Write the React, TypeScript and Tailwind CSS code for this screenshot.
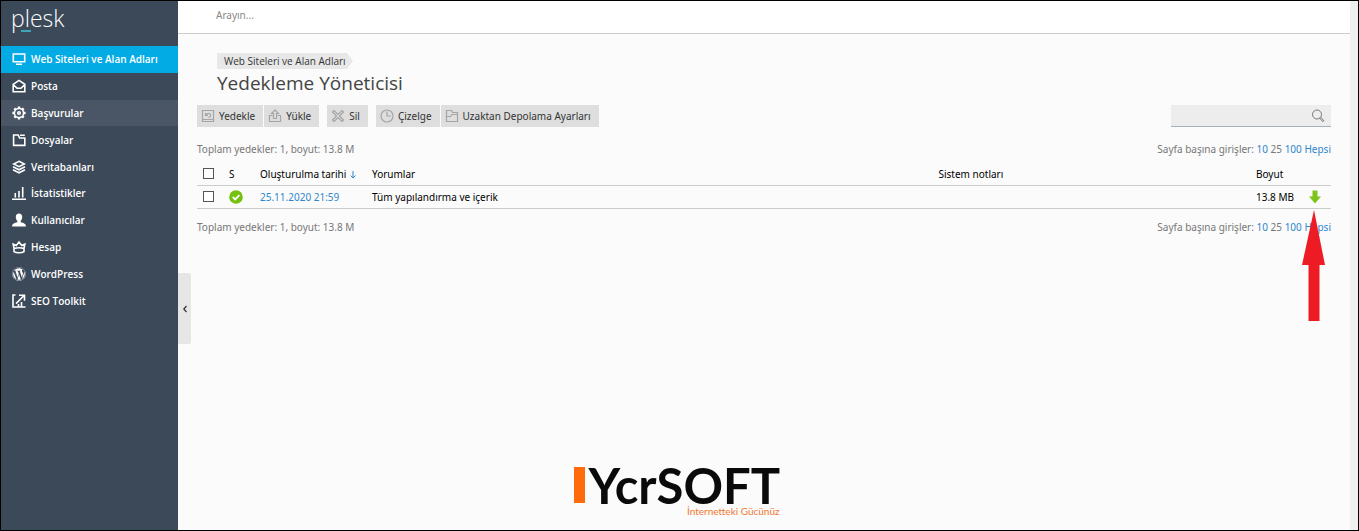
import { useState } from "react";
import type { ReactNode } from "react";
import { FaWordpress } from "react-icons/fa";

const Icon = ({ children }: { children: ReactNode }) => (
  <svg
    viewBox="0 0 14 14"
    className="size-[14px] shrink-0"
    fill="none"
    stroke="currentColor"
    strokeWidth="1.6"
    aria-hidden="true"
  >
    {children}
  </svg>
);

const menu: { label: string; icon: ReactNode }[] = [
  {
    label: "Web Siteleri ve Alan Adları",
    icon: (
      <Icon>
        <path d="M1.3 2h11.4v7.7H1.3zM4 12.3h6" />
      </Icon>
    ),
  },
  {
    label: "Posta",
    icon: (
      <Icon>
        <path d="M1.2 5.3 7 1.4l5.8 3.9v7.4H1.2zM1.5 6 5 9.2h4L12.5 6" />
      </Icon>
    ),
  },
  {
    label: "Başvurular",
    icon: (
      <Icon>
        <circle cx="7" cy="7" r="4.6" />
        <circle cx="7" cy="7" r="1.3" />
        <path
          strokeWidth="2.4"
          d="M7 .4v2M7 11.6v2M.4 7h2M11.6 7h2M2.3 2.3l1.2 1.2M10.5 10.5l1.2 1.2M2.3 11.7l1.2-1.2M10.5 3.5l1.2-1.2"
        />
      </Icon>
    ),
  },
  {
    label: "Dosyalar",
    icon: (
      <Icon>
        <path d="M1.6 2h4.6l1.4 3h5.2v7.4H1.6zM8 2.2h4.8" />
      </Icon>
    ),
  },
  {
    label: "Veritabanları",
    icon: (
      <Icon>
        <path d="M7 1.3 12.3 4 7 6.7 1.7 4zM1 6.8l6 3 6-3M1 9.8l6 3 6-3" />
      </Icon>
    ),
  },
  {
    label: "İstatistikler",
    icon: (
      <Icon>
        <path d="M0 13.2h14M3.3 7v4.5M7 5v6.5M10.7 1v10.5" />
      </Icon>
    ),
  },
  {
    label: "Kullanıcılar",
    icon: (
      <Icon>
        <path
          fill="currentColor"
          stroke="none"
          d="M7 .5c2 0 3.2 1.4 3.2 3.4 0 1.7-.7 3.1-1.5 3.9v1.5c1.6.5 4 .9 4.8 2.2.3.5.4 1.3.4 2H.1c0-.7.1-1.5.4-2 .8-1.3 3.2-1.7 4.8-2.2V7.8C4.5 7 3.8 5.6 3.8 3.9 3.8 1.9 5 .5 7 .5z"
        />
      </Icon>
    ),
  },
  {
    label: "Hesap",
    icon: (
      <Icon>
        <path d="M2 8.6 1.2 4.2 4.3 5.6 7 2l2.7 3.6 3.1-1.4L12 8.6c-3-1-7-1-10 0zM2 8.6v3c2 1.6 8 1.6 10 0v-3" />
      </Icon>
    ),
  },
  {
    label: "WordPress",
    icon: <FaWordpress className="size-[14px] shrink-0" aria-hidden="true" />,
  },
  {
    label: "SEO Toolkit",
    icon: (
      <Icon>
        <path d="M3.5 1H1v12h12.5M4 9.6l7.8-7.8M7 1.3h5.5v5.5M6.5 10v2.5M9.500 8v4.5" />
      </Icon>
    ),
  },
];

const ToolButton = ({ label, children }: { label: string; children: ReactNode }) => (
  <button
    type="button"
    className="flex h-[22px] items-center gap-1 bg-[#dedede] pr-2 pl-1 text-[#333]"
  >
    <svg
      viewBox="0 0 14 14"
      className="size-[14px] shrink-0 text-[#a5a5a5]"
      fill="none"
      stroke="currentColor"
      strokeWidth="1.2"
      aria-hidden="true"
    >
      {children}
    </svg>
    {label}
  </button>
);

const Checkbox = ({ label }: { label: string }) => (
  <input
    type="checkbox"
    aria-label={label}
    className="block size-[11px] appearance-none border border-[#555] bg-white checked:bg-[#2f86cd]"
  />
);

const PageInfo = () => (
  <div className="flex h-4 items-center justify-between text-[#777]">
    <span>Toplam yedekler: 1, boyut: 13.8 M</span>
    <span>
      Sayfa başına girişler:{" "}
      <a href="#10" className="text-[#2f86cd]">10</a> 25{" "}
      <a href="#100" className="text-[#2f86cd]">100</a>{" "}
      <a href="#all" className="text-[#2f86cd]">Hepsi</a>
    </span>
  </div>
);

const Sidebar = () => {
  const [active, setActive] = useState("Web Siteleri ve Alan Adları");

  return (
    <aside className="w-[177px] shrink-0 bg-[#3b4959] font-['Open_Sans',sans-serif] text-white">
      <a href="#home" aria-label="plesk" className="block h-[45px] pt-[3px] pl-[10px]">
        <span className="relative inline-block text-[23px] leading-7 font-light">
          plesk
          <span className="absolute bottom-0 left-[10px] h-[2px] w-[10px] bg-[#3da5b5]" />
        </span>
      </a>
      <nav className="grid h-[268px] auto-rows-fr">
        {menu.map(({ label, icon }) => (
          <a
            key={label}
            href="#menu"
            onClick={() => setActive(label)}
            className={`flex items-center gap-[5px] pl-[11px] font-semibold whitespace-nowrap ${
              active === label ? "bg-[#03abe5]" : label === "Başvurular" ? "bg-[#4a5665]" : ""
            }`}
          >
            {icon}
            {label}
          </a>
        ))}
      </nav>
    </aside>
  );
};

const BackupTable = () => (
  <table className="w-full table-fixed border-collapse text-left text-black">
    <colgroup>
      <col className="w-[26px]" />
      <col className="w-[31px]" />
      <col className="w-[112px]" />
      <col />
      <col className="w-[28%]" />
      <col className="w-[53px]" />
      <col className="w-[28px]" />
    </colgroup>
    <thead>
      <tr className="h-[24px] border-b border-[#ccc] *:pt-0.5 *:pl-1.5 *:font-normal">
        <th><Checkbox label="Tümünü seç" /></th>
        <th>S</th>
        <th className="whitespace-nowrap">
          Oluşturulma tarihi
          <svg viewBox="0 0 6 8" className="ml-1 inline h-2 w-[6px]" fill="none" stroke="#2f86cd" aria-hidden="true">
            <path d="M3 0v7M.5 4.5 3 7l2.5-2.5" />
          </svg>
        </th>
        <th>Yorumlar</th>
        <th>Sistem notları</th>
        <th>Boyut</th>
        <th />
      </tr>
    </thead>
    <tbody>
      <tr className="h-[23px] border-b border-[#ccc] *:pl-1.5">
        <td><Checkbox label="25.11.2020 21:59" /></td>
        <td>
          <svg viewBox="0 0 14 14" className="size-[14px]" fill="none" aria-hidden="true">
            <circle cx="7" cy="7" r="6.8" fill="#76c10f" />
            <path d="m3.8 7 2.4 2.4 4.2-4.2" stroke="#fff" strokeWidth="1.8" />
          </svg>
        </td>
        <td><a href="#backup" className="text-[#2f86cd]">25.11.2020 21:59</a></td>
        <td>Tüm yapılandırma ve içerik</td>
        <td />
        <td className="whitespace-nowrap">13.8 MB</td>
        <td>
          <a href="#download" aria-label="İndir" className="block">
            <svg viewBox="0 0 12 14" className="h-[14px] w-3" aria-hidden="true">
              <path d="M3.5.5h5v6H12l-6 7-6-7h3.5z" fill="#7ec51b" />
            </svg>
          </a>
        </td>
      </tr>
    </tbody>
  </table>
);

export default function App() {
  return (
    <div className="relative flex min-h-screen border border-black bg-[#fbfbfb] font-['Noto_Sans',sans-serif] text-[10px] leading-4">
      <Sidebar />
      <div className="relative min-w-0 flex-1">
        <header className="flex h-[33px] items-center border-b border-[#ccc] bg-white pb-1 pl-[38px]">
          <input
            type="search"
            aria-label="Arayın"
            placeholder="Arayın..."
            className="w-80 outline-none placeholder:text-[#888]"
          />
        </header>
        <main className="pt-[19px] pr-[19px] pl-[19px]">
          <div className="pl-5 font-['Open_Sans',sans-serif]">
            <a href="#sites" className="inline-flex h-4 text-[#333]">
              <span className="bg-[#e8e8e8] pl-[7px]">Web Siteleri ve Alan Adları</span>
              <svg viewBox="0 0 7 16" className="h-4 w-[7px]" aria-hidden="true">
                <path d="M0 0h1l6 8-6 8H0z" fill="#e8e8e8" />
              </svg>
            </a>
            <h1 className="text-[19px] leading-7 text-[#444]">Yedekleme Yöneticisi</h1>
          </div>
          <div className="mt-2 flex items-start justify-between">
            <div className="flex gap-2">
              <div className="flex gap-px">
                <ToolButton label="Yedekle">
                  <path d="M1.5 1.5h11v11h-11zM1.500 10.500h11M4.500 4v2.500H7M5 6.300c1.500-3 5-2 4.500.500-.2 1-1 1.500-2 1.500" />
                </ToolButton>
                <ToolButton label="Yükle">
                  <path d="M4.5 6.5h-3v6h11v-6h-3M5.5 9.5v-5h-2L7 1l3.500 3.500h-2v5z" />
                </ToolButton>
              </div>
              <ToolButton label="Sil">
                <path d="m1.5 3 1.5-1.500 4 4 4-4L12.500 3l-4 4 4 4-1.500 1.500-4-4-4 4L1.500 11l4-4z" />
              </ToolButton>
              <div className="flex gap-px">
                <ToolButton label="Çizelge">
                  <circle cx="7" cy="7" r="6" />
                  <path d="M7 2.5V7h4" />
                </ToolButton>
                <ToolButton label="Uzaktan Depolama Ayarları">
                  <path d="M1.5 1.500h5l1 2h5v9h-11zM1.500 7.500h4l1.500-2h5.500" />
                </ToolButton>
              </div>
            </div>
            <form className="flex h-[22px] w-40 items-center border-b border-[#a3afbc] bg-[#ededed] pr-1.5">
              <input type="search" aria-label="Ara" className="min-w-0 flex-1 px-1 outline-none" />
              <button type="button" aria-label="Ara">
                <svg viewBox="0 0 14 14" className="size-[14px]" fill="none" stroke="#777" aria-hidden="true">
                  <circle cx="6" cy="5.5" r="4.5" />
                  <path d="m8.8 9.5 1-1 3.2 3.2-1 1z" />
                </svg>
              </button>
            </form>
          </div>
          <div className="mt-[14px]">
            <PageInfo />
            <div className="mt-1 mb-[10px]">
              <BackupTable />
            </div>
            <PageInfo />
          </div>
        </main>
        <button
          type="button"
          aria-label="Menüyü daralt"
          className="absolute top-[272px] left-0 flex h-[71px] w-[13px] items-center justify-center rounded-r-xs bg-[#e6e6e6]"
        >
          <svg viewBox="0 0 4 8" className="h-2 w-1" fill="none" stroke="#333" strokeWidth="1.2" aria-hidden="true">
            <path d="M3.5 1 .8 4l2.7 3" />
          </svg>
        </button>
        <svg viewBox="0 0 24 112" className="absolute top-[209px] right-[24px] h-28 w-6" aria-hidden="true">
          <path d="M12 0 23 55h-5.5v56h-11V55H0z" fill="#ed1c24" />
        </svg>
      </div>
      <div className="w-2 shrink-0 bg-[#efefef]" />
      <div className="absolute bottom-[13px] left-1/2 -ml-[106px] flex w-[206px] flex-col font-['Lato',sans-serif]">
        <div className="flex items-center gap-1">
          <span className="h-9 w-[11px] shrink-0 bg-[#ff6a0a]" />
          <span className="text-[49px] leading-10 font-bold text-[#0a0a0a]">YcrSOFT</span>
        </div>
        <span className="self-end text-[10px] leading-3 text-[#f07830]">İnternetteki Gücünüz</span>
      </div>
    </div>
  );
}
